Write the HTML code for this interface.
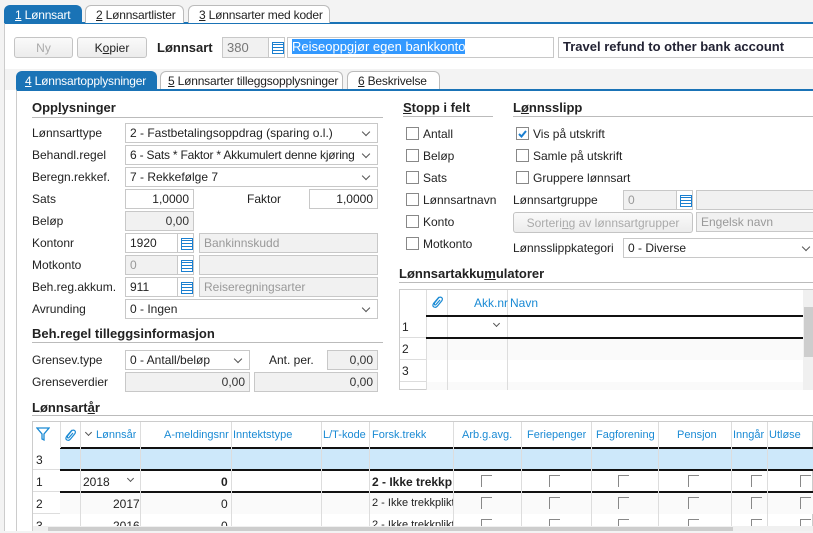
<!DOCTYPE html>
<html><head><meta charset="utf-8"><style>
*{box-sizing:border-box;margin:0;padding:0}
body{width:813px;height:531px;overflow:hidden;background:#f3f3f3;font-family:"Liberation Sans",sans-serif;font-size:12px;color:#222;position:relative}
.a{position:absolute}
.tab{position:absolute;height:18px;border:1px solid #bbb;border-bottom:none;background:#fff;padding:2px 0 0 10px;font-size:12px;border-radius:6px 6px 0 0;white-space:nowrap;letter-spacing:-0.2px}
.tab.on{background:#1a73b6;color:#fff;border-color:#1a73b6}
.inp{position:absolute;height:20px;border:1px solid #c8c8c8;background:#fff;padding:2px 4px;white-space:nowrap;overflow:hidden}
.g{background:#f1f1f1;color:#999}
.r{text-align:right}
.sel{padding-right:20px}
.sel::after{content:"";position:absolute;right:8px;top:5px;width:5px;height:5px;border-right:1px solid #555;border-bottom:1px solid #555;transform:rotate(45deg)}
.ic{position:absolute;width:17px;height:20px;border:1px solid #c8c8c8;background:#fff}
.ic::before{content:"";position:absolute;left:3px;top:4px;width:10px;height:10px;border:1px solid #1a7fd0;background:repeating-linear-gradient(#fff 0 1px,#1a7fd0 1px 2px,#fff 2px 3px)}
.lbl{position:absolute;white-space:nowrap}
.h{position:absolute;font-weight:bold;font-size:13px}
.line{position:absolute;height:1px;background:#bbb}
.cb{position:absolute;width:13px;height:13px;border:1px solid #888;background:#fff}
.btn{position:absolute;height:21px;border:1px solid #c4c4c4;border-radius:3px;background:linear-gradient(#fafafa,#ececec);text-align:center;padding-top:3px;white-space:nowrap}
.hd{color:#1a8ad4;position:absolute;white-space:nowrap;font-size:11px;overflow:hidden}
.vl{position:absolute;width:1px;background:#ddd}
.cbs{position:absolute;width:11px;height:12px;border-left:1px solid #888;border-top:1px solid #888}
.chev{position:absolute;width:5px;height:5px;border-right:1px solid #555;border-bottom:1px solid #555;transform:rotate(45deg)}
</style></head><body>
<div class="a" style="left:4px;top:22px;width:809px;height:509px;background:#fff;border-left:1px solid #ccc;border-top:2px solid #1a73b6"></div>
<div class="tab on" style="left:4px;top:5px;width:78px"><u>1</u> Lønnsart</div>
<div class="tab" style="left:85px;top:5px;width:99px"><u>2</u> Lønnsartlister</div>
<div class="tab" style="left:188px;top:5px;width:142px"><u>3</u> Lønnsarter med koder</div>
<div class="btn" style="left:14px;top:37px;width:59px;color:#aaa">Ny</div>
<div class="btn" style="left:77px;top:37px;width:70px">K<u>o</u>pier</div>
<div class="lbl" style="left:157px;top:40px;font-size:13px;font-weight:bold">Lønnsart</div>
<div class="inp g" style="left:222px;top:37px;width:47px;height:21px;color:#777;font-size:13px">380</div>
<div class="ic" style="left:268px;top:37px;height:21px"></div>
<div class="inp" style="left:287px;top:37px;width:267px;height:21px;font-size:13px;padding-top:1px"><span style="background:#3399ff;color:#fff">Reiseoppgjør egen bankkonto</span></div>
<div class="inp" style="left:558px;top:37px;width:260px;height:21px;font-size:13px;font-weight:bold;padding-top:1px;color:#223">Travel refund to other bank account</div>
<div class="a" style="left:5px;top:69px;width:808px;height:21px;background:#f3f3f3"></div>
<div class="a" style="left:16px;top:89px;width:797px;height:442px;background:#fff;border-left:1px solid #ccc;border-top:2px solid #1a73b6"></div>
<div class="tab on" style="left:16px;top:71px;width:141px;padding-left:8px"><u>4</u> Lønnsartopplysninger</div>
<div class="tab" style="left:160px;top:71px;width:183px;padding-left:7px"><u>5</u> Lønnsarter tilleggsopplysninger</div>
<div class="tab" style="left:347px;top:71px;width:93px"><u>6</u> Beskrivelse</div>

<div class="h" style="left:32px;top:100px">Opp<u>l</u>ysninger</div>
<div class="line" style="left:32px;top:117px;width:351px"></div>
<div class="lbl" style="left:32px;top:126px">Lønnsarttype</div>
<div class="inp sel" style="left:125px;top:123px;width:253px">2 - Fastbetalingsoppdrag (sparing o.l.)</div>
<div class="lbl" style="left:32px;top:148px">Behandl.regel</div>
<div class="inp sel" style="left:125px;top:145px;width:253px;letter-spacing:-0.2px">6 - Sats * Faktor * Akkumulert denne kjøring</div>
<div class="lbl" style="left:32px;top:170px">Beregn.rekkef.</div>
<div class="inp sel" style="left:125px;top:167px;width:253px">7 - Rekkefølge 7</div>
<div class="lbl" style="left:32px;top:192px">Sats</div>
<div class="inp r" style="left:125px;top:189px;width:69px">1,0000</div>
<div class="lbl" style="left:247px;top:192px">Faktor</div>
<div class="inp r" style="left:309px;top:189px;width:69px">1,0000</div>
<div class="lbl" style="left:32px;top:214px">Beløp</div>
<div class="inp r g" style="left:125px;top:211px;width:69px;color:#333">0,00</div>
<div class="lbl" style="left:32px;top:236px">Kontonr</div>
<div class="inp" style="left:125px;top:233px;width:53px">1920</div><div class="ic" style="left:177px;top:233px"></div>
<div class="inp g" style="left:199px;top:233px;width:179px">Bankinnskudd</div>
<div class="lbl" style="left:32px;top:258px">Motkonto</div>
<div class="inp g" style="left:125px;top:255px;width:53px">0</div><div class="ic" style="left:177px;top:255px"></div>
<div class="inp g" style="left:199px;top:255px;width:179px"></div>
<div class="lbl" style="left:32px;top:280px">Beh.reg.akkum.</div>
<div class="inp" style="left:125px;top:277px;width:53px">911</div><div class="ic" style="left:177px;top:277px"></div>
<div class="inp g" style="left:199px;top:277px;width:179px">Reiseregningsarter</div>
<div class="lbl" style="left:32px;top:302px">Avrunding</div>
<div class="inp sel" style="left:125px;top:299px;width:253px">0 - Ingen</div>
<div class="h" style="left:32px;top:326px">Beh.re<u>g</u>el tilleggsinformasjon</div>
<div class="line" style="left:32px;top:342px;width:351px"></div>
<div class="lbl" style="left:32px;top:353px">Grensev.type</div>
<div class="inp sel" style="left:125px;top:350px;width:125px">0 - Antall/beløp</div>
<div class="lbl" style="left:269px;top:353px">Ant. per.</div>
<div class="inp r g" style="left:327px;top:350px;width:51px;color:#333">0,00</div>
<div class="lbl" style="left:32px;top:375px">Grenseverdier</div>
<div class="inp r g" style="left:125px;top:372px;width:125px;color:#333">0,00</div>
<div class="inp r g" style="left:254px;top:372px;width:124px;color:#333">0,00</div>

<div class="h" style="left:403px;top:100px"><u>S</u>topp i felt</div>
<div class="line" style="left:403px;top:116px;width:90px"></div>
<div class="cb" style="left:406px;top:127px"></div><div class="lbl" style="left:423px;top:127px">Antall</div>
<div class="cb" style="left:406px;top:149px"></div><div class="lbl" style="left:423px;top:149px">Beløp</div>
<div class="cb" style="left:406px;top:171px"></div><div class="lbl" style="left:423px;top:171px">Sats</div>
<div class="cb" style="left:406px;top:193px"></div><div class="lbl" style="left:423px;top:193px">Lønnsartnavn</div>
<div class="cb" style="left:406px;top:215px"></div><div class="lbl" style="left:423px;top:215px">Konto</div>
<div class="cb" style="left:406px;top:237px"></div><div class="lbl" style="left:423px;top:237px">Motkonto</div>

<div class="h" style="left:513px;top:100px">L<u>ø</u>nnsslipp</div>
<div class="line" style="left:513px;top:116px;width:300px"></div>
<div class="cb" style="left:516px;top:127px"><svg width="11" height="11" style="position:absolute;left:0;top:0"><path d="M2 6 L4.5 8.5 L9 3" stroke="#1a7fd0" stroke-width="2" fill="none"/></svg></div><div class="lbl" style="left:533px;top:127px">Vis på utskrift</div>
<div class="cb" style="left:516px;top:149px"></div><div class="lbl" style="left:533px;top:149px">Samle på utskrift</div>
<div class="cb" style="left:516px;top:171px"></div><div class="lbl" style="left:533px;top:171px">Gruppere lønnsart</div>
<div class="lbl" style="left:513px;top:193px">Lønnsartgruppe</div>
<div class="inp g" style="left:623px;top:190px;width:55px">0</div><div class="ic" style="left:676px;top:190px"></div>
<div class="inp g" style="left:696px;top:190px;width:120px"></div>
<div class="btn" style="left:513px;top:212px;width:180px;color:#aaa">Sorteri<u>n</u>g av lønnsartgrupper</div>
<div class="inp g" style="left:696px;top:212px;width:120px">Engelsk navn</div>
<div class="lbl" style="left:513px;top:241px">Lønnsslippkategori</div>
<div class="inp sel" style="left:623px;top:238px;width:195px">0 - Diverse</div>

<div class="h" style="left:399px;top:266px">Lønnsartakku<u>m</u>ulatorer</div>
<div class="line" style="left:399px;top:282px;width:414px"></div>
<div class="a" style="left:399px;top:289px;width:414px;height:101px;border:1px solid #ccc;background:#fff"></div>
<div class="a" style="left:426px;top:338px;width:377px;height:22px;background:#fafafa"></div>
<div class="a" style="left:426px;top:382px;width:377px;height:8px;background:#fafafa"></div>
<div class="vl" style="left:426px;top:290px;height:100px"></div>
<div class="vl" style="left:447px;top:290px;height:100px"></div>
<div class="vl" style="left:507px;top:290px;height:100px"></div>
<div class="a" style="left:400px;top:337px;width:26px;height:1px;background:#ddd"></div>
<div class="a" style="left:400px;top:359px;width:26px;height:1px;background:#ddd"></div>
<div class="a" style="left:400px;top:381px;width:26px;height:1px;background:#ddd"></div>
<div class="a" style="left:426px;top:315px;width:377px;height:2px;background:#111"></div>
<div class="a" style="left:426px;top:337px;width:377px;height:2px;background:#111"></div>
<svg class="a" style="left:430px;top:294px" width="14" height="16"><path d="M9 3 L3.5 9.5 Q2 12 4 13 Q6 14 7.5 12 L12 6.5 Q13 4.5 11.5 3.5 Q10 2.5 8.5 4 L4.5 9 Q4 10.5 5 11 Q6 11 6.5 10 L10 6" stroke="#1a8ad4" stroke-width="1.2" fill="none"/></svg>
<div class="hd" style="left:474px;top:296px;font-size:12px">Akk.nr</div><div class="hd" style="left:510px;top:296px;font-size:12px">Navn</div>
<div class="lbl" style="left:402px;top:320px">1</div><div class="lbl" style="left:402px;top:342px">2</div><div class="lbl" style="left:402px;top:364px">3</div>
<div class="chev" style="left:494px;top:321px"></div>
<div class="a" style="left:803px;top:290px;width:10px;height:100px;background:#f0f0f0"></div>
<div class="a" style="left:804px;top:307px;width:9px;height:50px;background:#cdcdcd"></div>

<div class="h" style="left:32px;top:400px">Lønnsart<u>å</u>r</div>
<div class="line" style="left:32px;top:415px;width:781px"></div>
<div class="a" style="left:32px;top:421px;width:781px;height:110px;border:1px solid #ccc;background:#fff"></div>
<div class="a" style="left:60px;top:448px;width:753px;height:22px;background:#cde8fa"></div>
<div class="a" style="left:60px;top:492px;width:753px;height:22px;background:#fafafa"></div>
<div class="a" style="left:60px;top:447px;width:753px;height:2px;background:#111"></div>
<div class="a" style="left:60px;top:469px;width:753px;height:2px;background:#111"></div>
<div class="a" style="left:60px;top:491px;width:753px;height:2px;background:#111"></div>
<div class="a" style="left:33px;top:469px;width:27px;height:1px;background:#ddd"></div>
<div class="a" style="left:33px;top:491px;width:27px;height:1px;background:#ddd"></div>
<div class="a" style="left:33px;top:513px;width:27px;height:1px;background:#ddd"></div>
<div class="vl" style="left:60px;top:422px;height:26px"></div>
<div class="vl" style="left:80px;top:422px;height:109px"></div>
<div class="vl" style="left:140px;top:422px;height:109px"></div>
<div class="vl" style="left:231px;top:422px;height:109px"></div>
<div class="vl" style="left:321px;top:422px;height:109px"></div>
<div class="vl" style="left:369px;top:422px;height:109px"></div>
<div class="vl" style="left:453px;top:422px;height:109px"></div>
<div class="vl" style="left:521px;top:422px;height:109px"></div>
<div class="vl" style="left:591px;top:422px;height:109px"></div>
<div class="vl" style="left:658px;top:422px;height:109px"></div>
<div class="vl" style="left:731px;top:422px;height:109px"></div>
<div class="vl" style="left:767px;top:422px;height:109px"></div>
<svg class="a" style="left:36px;top:426px" width="14" height="16"><path d="M1 2 H13 L8 8 V14 L6 13 V8 Z" stroke="#1a8ad4" fill="none" stroke-width="1.3"/></svg>
<svg class="a" style="left:63px;top:427px" width="14" height="16"><path d="M9 3 L3.5 9.5 Q2 12 4 13 Q6 14 7.5 12 L12 6.5 Q13 4.5 11.5 3.5 Q10 2.5 8.5 4 L4.5 9 Q4 10.5 5 11 Q6 11 6.5 10 L10 6" stroke="#1a8ad4" stroke-width="1.2" fill="none"/></svg>
<div class="chev" style="left:86px;top:430px;border-color:#555"></div>
<div class="hd" style="left:96px;top:429px">Lønnsår</div>
<div class="hd" style="left:164px;top:429px">A-meldingsnr</div>
<div class="hd" style="left:233px;top:429px">Inntektstype</div>
<div class="hd" style="left:323px;top:429px">L/T-kode</div>
<div class="hd" style="left:372px;top:429px">Forsk.trekk</div>
<div class="hd" style="left:462px;top:429px">Arb.g.avg.</div>
<div class="hd" style="left:527px;top:429px">Feriepenger</div>
<div class="hd" style="left:596px;top:429px">Fagforening</div>
<div class="hd" style="left:677px;top:429px">Pensjon</div>
<div class="hd" style="left:733px;top:429px;width:34px">Inngår i gr</div>
<div class="hd" style="left:769px;top:429px">Utløse</div>
<div class="lbl" style="left:36px;top:453px">3</div>
<div class="lbl" style="left:36px;top:475px">1</div><div class="lbl" style="left:36px;top:497px">2</div><div class="lbl" style="left:36px;top:519px">3</div>
<div class="lbl" style="left:83px;top:475px">2018</div><div class="chev" style="left:128px;top:476px"></div>
<div class="lbl" style="left:113px;top:497px">2017</div><div class="lbl" style="left:113px;top:519px">2016</div>
<div class="lbl" style="left:221px;top:475px;font-weight:bold">0</div>
<div class="lbl" style="left:221px;top:497px">0</div><div class="lbl" style="left:221px;top:519px">0</div>
<div class="lbl" style="left:372px;top:475px;font-weight:bold;width:81px;overflow:hidden">2 - Ikke trekkp</div>
<div class="lbl" style="left:372px;top:497px;width:81px;overflow:hidden;font-size:11px">2 - Ikke trekkplikti</div>
<div class="lbl" style="left:372px;top:519px;width:81px;overflow:hidden;font-size:11px">2 - Ikke trekkplikti</div>
<div class="cbs" style="left:481px;top:475px"></div><div class="cbs" style="left:549px;top:475px"></div><div class="cbs" style="left:618px;top:475px"></div><div class="cbs" style="left:688px;top:475px"></div><div class="cbs" style="left:751px;top:475px"></div><div class="cbs" style="left:800px;top:475px"></div>
<div class="cbs" style="left:481px;top:497px"></div><div class="cbs" style="left:549px;top:497px"></div><div class="cbs" style="left:618px;top:497px"></div><div class="cbs" style="left:688px;top:497px"></div><div class="cbs" style="left:751px;top:497px"></div><div class="cbs" style="left:800px;top:497px"></div>
<div class="cbs" style="left:481px;top:519px"></div><div class="cbs" style="left:549px;top:519px"></div><div class="cbs" style="left:618px;top:519px"></div><div class="cbs" style="left:688px;top:519px"></div><div class="cbs" style="left:751px;top:519px"></div><div class="cbs" style="left:800px;top:519px"></div>
<div class="a" style="left:33px;top:526px;width:780px;height:5px;background:#f0f0f0"></div>
<div class="a" style="left:48px;top:527px;width:685px;height:4px;background:#cdcdcd"></div>
</body></html>
